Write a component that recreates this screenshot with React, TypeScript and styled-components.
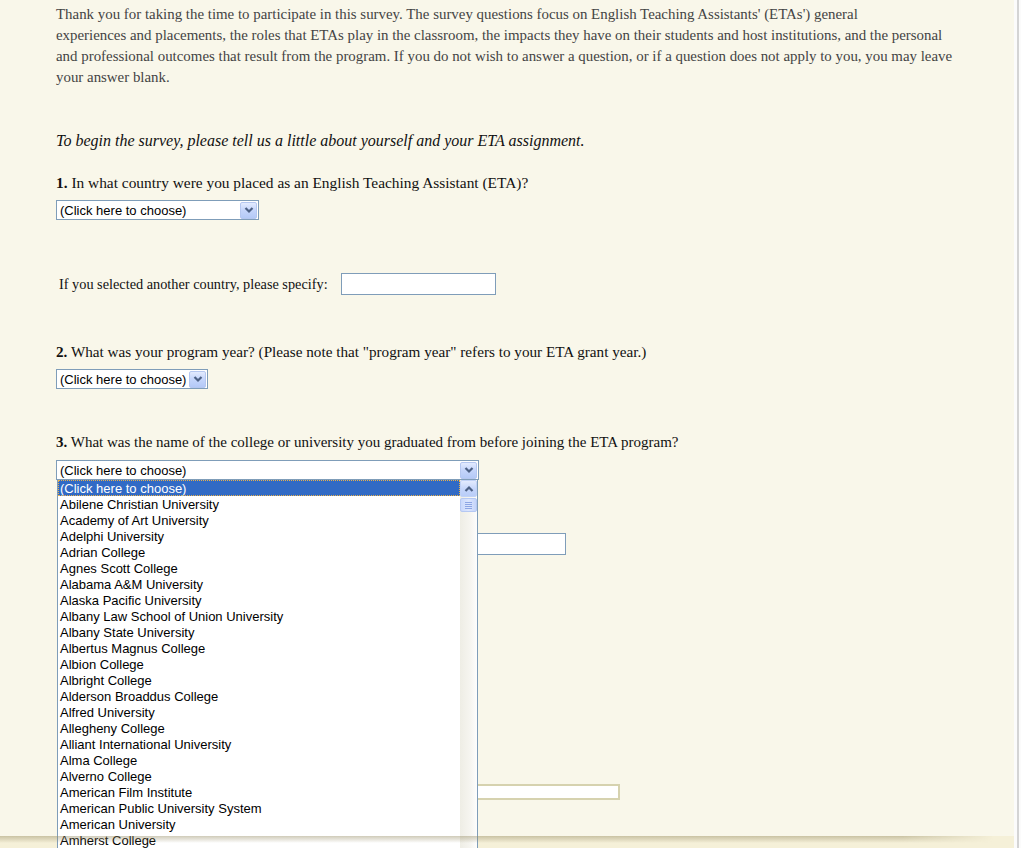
import React from "react";
import styled, { createGlobalStyle } from "styled-components";

const Global = createGlobalStyle`
  html, body { margin: 0; padding: 0; overflow: hidden; }
  body { background: #f5f0d8; font-family: "Liberation Serif", "Times New Roman", serif; }
`;

const Frame = styled.div`
  display: flex;
  width: 1021px;
  height: 848px;
  overflow: hidden;
`;

const Main = styled.div`
  flex: 1;
  display: flex;
  flex-direction: column;
  background: #f5f0d8;
`;

const Edge = styled.div`
  width: 7px;
  box-sizing: border-box;
  background: #fbfbfb;
  border-left: 3px solid #fbfbfb;
  display: flex;
`;

const EdgeLine = styled.div`
  width: 2px;
  background: #d4d4d4;
`;

const Panel = styled.div`
  position: relative;
  height: 836px;
  box-sizing: border-box;
  background: #f9f7ea;
  padding: 4px 0 0 56px;
  flex-shrink: 0;
`;

const Shadow = styled.div`
  height: 7px;
  background: linear-gradient(to bottom, rgba(150, 140, 100, 0.45), rgba(150, 140, 100, 0));
  -webkit-mask-image: linear-gradient(to right, #000 0, #000 89%, transparent 98%);
  mask-image: linear-gradient(to right, #000 0, #000 89%, transparent 98%);
`;

const Intro = styled.div`
  font-size: 14.9px;
  line-height: 21px;
  color: #444;
`;

const Line = styled.div`
  white-space: nowrap;
`;

const Lead = styled.div`
  margin-top: 42px;
  font-size: 16px;
  line-height: 21px;
  font-style: italic;
  color: #111;
`;

const Question = styled.div<{ $mt: number; $fs?: number }>`
  margin-top: ${(p) => p.$mt}px;
  font-size: ${(p) => p.$fs ?? 15.2}px;
  line-height: 21px;
  color: #111;
  white-space: nowrap;
  b { font-weight: bold; }
`;

const SelectBox = styled.div<{ $w: number; $mt: number }>`
  margin-top: ${(p) => p.$mt}px;
  width: ${(p) => p.$w}px;
  height: 20px;
  box-sizing: border-box;
  border: 1px solid #7f9db9;
  background: #fff;
  display: flex;
  align-items: center;
  justify-content: space-between;
  padding: 0 1px 0 3px;
  font-family: "Liberation Sans", Arial, sans-serif;
  font-size: 13px;
  color: #000;
`;

const ArrowBtn = styled.div`
  width: 17px;
  height: 17px;
  box-sizing: border-box;
  border: 1px solid #b5c7f0;
  border-radius: 2px;
  background: linear-gradient(to bottom, #e3ebfe 0%, #c6d6fb 45%, #b4c9f7 100%);
  display: flex;
  align-items: center;
  justify-content: center;
`;

const SpecifyRow = styled.div<{ $mt: number }>`
  margin-top: ${(p) => p.$mt}px;
  display: flex;
  align-items: center;
  gap: 13px;
  padding-left: 3px;
  font-size: 14.3px;
  color: #111;
`;

const TextInput = styled.div<{ $w: number }>`
  width: ${(p) => p.$w}px;
  height: 22px;
  box-sizing: border-box;
  border: 1px solid #7f9db9;
  background: #fff;
`;

const HiddenInput = styled.div<{ $w: number; $ml: number; $mt: number; $tan?: boolean }>`
  margin-top: ${(p) => p.$mt}px;
  margin-left: ${(p) => p.$ml}px;
  width: ${(p) => p.$w}px;
  height: ${(p) => (p.$tan ? 16 : 22)}px;
  box-sizing: border-box;
  border: ${(p) => (p.$tan ? "2px solid #d6d2af" : "1px solid #7f9db9")};
  background: #fff;
`;

const ListBox = styled.div`
  position: absolute;
  left: 57px;
  top: 480px;
  width: 421px;
  height: 380px;
  box-sizing: border-box;
  border: 1px solid #7f9db9;
  border-top: none;
  background: #fff;
  display: flex;
`;

const Items = styled.div`
  flex: 1;
  display: flex;
  flex-direction: column;
  font-family: "Liberation Sans", Arial, sans-serif;
  font-size: 13px;
`;

const Item = styled.div<{ $sel?: boolean }>`
  height: 16px;
  line-height: 15px;
  padding: 1px 0 0 2px;
  white-space: nowrap;
  box-sizing: border-box;
  color: ${(p) => (p.$sel ? "#fff" : "#000")};
  background: ${(p) => (p.$sel ? "#316ac5" : "transparent")};
  outline: ${(p) => (p.$sel ? "1px dotted #e8b04a" : "none")};
  outline-offset: -1px;
`;

const ScrollBar = styled.div`
  width: 17px;
  display: flex;
  flex-direction: column;
  background: linear-gradient(to right, #eeede5, #f6f5f0 60%, #fdfdfd);
`;

const ScrollBtn = styled.div`
  height: 17px;
  box-sizing: border-box;
  border: 1px solid #c1d2f6;
  border-radius: 2px;
  background: linear-gradient(to bottom, #e3ebfe 0%, #c6d6fb 50%, #b9cdf8 100%);
  display: flex;
  align-items: center;
  justify-content: center;
`;

const Thumb = styled.div`
  height: 14px;
  margin-top: 1px;
  box-sizing: border-box;
  border: 1px solid #b5c8f3;
  border-radius: 2px;
  background: linear-gradient(to right, #c9d8fc, #dbe5fd 50%, #c4d4fa);
  display: flex;
  flex-direction: column;
  align-items: center;
  justify-content: center;
  gap: 1px;
`;

const Grip = styled.div`
  width: 7px;
  height: 1px;
  background: #8ca5e4;
`;

const Chevron = ({ up }: { up?: boolean }) => (
  <svg width="10" height="8" viewBox="0 0 10 8">
    <path
      d={up ? "M1.5 6 L5 2.5 L8.5 6" : "M1.5 2 L5 5.5 L8.5 2"}
      fill="none"
      stroke="#4d6185"
      strokeWidth="2.2"
    />
  </svg>
);

const Select = ({ w, mt }: { w: number; mt: number }) => (
  <SelectBox $w={w} $mt={mt}>
    <span>(Click here to choose)</span>
    <ArrowBtn>
      <Chevron />
    </ArrowBtn>
  </SelectBox>
);

const schools = [
  "Abilene Christian University",
  "Academy of Art University",
  "Adelphi University",
  "Adrian College",
  "Agnes Scott College",
  "Alabama A&M University",
  "Alaska Pacific University",
  "Albany Law School of Union University",
  "Albany State University",
  "Albertus Magnus College",
  "Albion College",
  "Albright College",
  "Alderson Broaddus College",
  "Alfred University",
  "Allegheny College",
  "Alliant International University",
  "Alma College",
  "Alverno College",
  "American Film Institute",
  "American Public University System",
  "American University",
  "Amherst College",
];

export default function App() {
  return (
    <>
      <Global />
      <Frame>
        <Main>
          <Panel>
            <Intro>
              <Line>
                Thank you for taking the time to participate in this survey. The survey questions focus on English Teaching Assistants' (ETAs') general
              </Line>
              <Line>
                experiences and placements, the roles that ETAs play in the classroom, the impacts they have on their students and host institutions, and the personal
              </Line>
              <Line>
                and professional outcomes that result from the program. If you do not wish to answer a question, or if a question does not apply to you, you may leave
              </Line>
              <Line>your answer blank.</Line>
            </Intro>
            <Lead>To begin the survey, please tell us a little about yourself and your ETA assignment.</Lead>
            <Question $mt={21} $fs={15.4}>
              <b>1.</b> In what country were you placed as an English Teaching Assistant (ETA)?
            </Question>
            <Select w={203} mt={7} />
            <SpecifyRow $mt={53}>
              <span>If you selected another country, please specify:</span>
              <TextInput $w={155} />
            </SpecifyRow>
            <Question $mt={46}>
              <b>2.</b> What was your program year? (Please note that "program year" refers to your ETA grant year.)
            </Question>
            <Select w={152} mt={7} />
            <Question $mt={43} $fs={15}>
              <b>3.</b> What was the name of the college or university you graduated from before joining the ETA program?
            </Question>
            <Select w={423} mt={7} />
            <HiddenInput $w={155} $ml={355} $mt={53} />
            <HiddenInput $w={300} $ml={264} $mt={229} $tan />
            <ListBox>
              <Items>
                <Item $sel>(Click here to choose)</Item>
                {schools.map((s) => (
                  <Item key={s}>{s}</Item>
                ))}
              </Items>
              <ScrollBar>
                <ScrollBtn>
                  <Chevron up />
                </ScrollBtn>
                <Thumb>
                  <Grip />
                  <Grip />
                  <Grip />
                  <Grip />
                </Thumb>
              </ScrollBar>
            </ListBox>
          </Panel>
          <Shadow />
        </Main>
        <Edge>
          <EdgeLine />
        </Edge>
      </Frame>
    </>
  );
}
